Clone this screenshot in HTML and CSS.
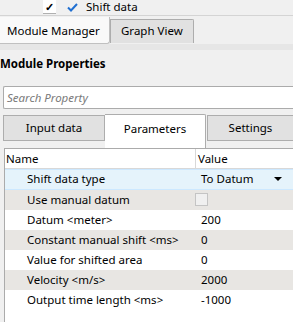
FILE: index.html
```html
<!DOCTYPE HTML>
<html lang="en">
<head>
    <meta charset="utf-8"/>
    <title>Module Properties</title>
    <link rel="stylesheet" href="styles.css">
</head>
<body>
    <div class="topbar">
        <span class="box">&#10003;</span>
        <svg class="tick" width="11" height="9" viewBox="0 0 11 9"><path d="M1 4.5 L4 7.5 L10 1" fill="none" stroke="#1f6fd1" stroke-width="2"/></svg>
        <span class="toplabel">Shift data</span>
    </div>
    <div class="tabs">
        <div class="tab active">Module Manager</div>
        <div class="tab">Graph View</div>
    </div>
    <div class="band"></div>
    <div class="panel">
        <div class="title">Module Properties</div>
        <div class="search">Search Property</div>
        <div class="ptabs">
            <div class="ptab first">Input data</div>
            <div class="ptab sel">Parameters</div>
            <div class="ptab last">Settings</div>
        </div>
        <div class="grid">
            <div class="row head"><span class="name">Name</span><span class="val">Value</span></div>
            <div class="row picked"><span class="name">Shift data type</span><span class="val">To Datum<i class="arrow"></i></span></div>
            <div class="row alt"><span class="name">Use manual datum</span><span class="val"><i class="check"></i></span></div>
            <div class="row"><span class="name">Datum &lt;meter&gt;</span><span class="val">200</span></div>
            <div class="row alt"><span class="name">Constant manual shift &lt;ms&gt;</span><span class="val">0</span></div>
            <div class="row"><span class="name">Value for shifted area</span><span class="val">0</span></div>
            <div class="row alt"><span class="name">Velocity &lt;m/s&gt;</span><span class="val">2000</span></div>
            <div class="row"><span class="name">Output time length &lt;ms&gt;</span><span class="val">-1000</span></div>
        </div>
    </div>
</body>
</html>
```

FILE: styles.css
```css
body {
    margin: 0;
    width: 293px;
    height: 322px;
    overflow: hidden;
    background-color: #f0f0f0;
    font-family: "Noto Sans", "Open Sans", sans-serif;
    font-size: 11.5px;
    color: #000;
}

.topbar {
    display: flex;
    align-items: flex-start;
    height: 16px;
    border-bottom: 1px solid #d4d4d4;
    box-sizing: border-box;
    padding-left: 43px;
}

.box {
    width: 13px;
    height: 13px;
    background-color: #fff;
    border-bottom: 1px solid #b0b0b0;
    font-size: 11px;
    line-height: 13px;
    text-align: center;
    font-weight: bold;
}

.tick {
    margin-left: 11px;
    margin-top: 3px;
}

.toplabel {
    margin-left: 8px;
    line-height: 14px;
}

.tabs {
    display: flex;
    align-items: flex-end;
    height: 28px;
}

.tab {
    height: 23px;
    line-height: 22px;
    padding: 0 10px;
    white-space: nowrap;
    background-color: #e1e1e1;
    border: 1px solid #adadad;
    border-bottom: none;
    border-radius: 0 2px 0 0;
    margin-bottom: 1px;
}

.tab.active {
    height: 26px;
    line-height: 28px;
    width: 102px;
    padding: 0 0 0 7px;
    margin-bottom: 0;
    background-color: #f9f9f9;
    border: none;
    border-right: 1px solid #c0c0c0;
    border-bottom: 1px solid #c0c0c0;
    border-radius: 0 0 3px 0;
}

.band {
    height: 6px;
    background-color: #e6e6e6;
}

.panel {
    padding-left: 3px;
}

.title {
    margin-left: -3px;
    height: 36px;
    line-height: 28px;
    font-weight: bold;
    white-space: nowrap;
}

.search {
    height: 21px;
    line-height: 21px;
    padding-left: 3px;
    background-color: #fff;
    border: 1px solid #ababab;
    border-right: none;
    border-radius: 2px 0 0 2px;
    color: #7a7a7a;
    font-style: italic;
}

.ptabs {
    display: flex;
    align-items: flex-end;
    height: 34px;
    margin-top: 5px;
}

.ptab {
    height: 24px;
    line-height: 24px;
    text-align: center;
    background-color: #e1e1e1;
    border: 1px solid #adadad;
    margin-bottom: 7px;
}

.ptab.first {
    width: 100px;
}

.ptab.sel {
    width: 100px;
    height: 33px;
    line-height: 28px;
    margin-bottom: 0;
    background-color: #fff;
    border-bottom: none;
    border-left: none;
    border-radius: 0 2px 0 0;
}

.ptab.last {
    flex: 1;
    border-right: none;
    margin-left: 1px;
}

.grid {
    height: 180px;
    background-color: #fff;
    border-left: 1px solid #ababab;
    border-top: 1px solid #ababab;
    margin-left: 1px;
}

.row {
    display: flex;
    height: 20px;
    line-height: 19px;
    white-space: nowrap;
}

.row .name {
    width: 168px;
    padding-left: 22px;
    overflow: hidden;
}

.row .val {
    position: relative;
    flex: 1;
    padding-left: 6px;
}

.row.head {
    height: 19px;
    border-bottom: 1px solid #d8d8d8;
}

.row.head .name {
    width: 189px;
    padding-left: 1px;
    border-right: 1px solid #d8d8d8;
}

.row.head .val {
    padding-left: 2px;
}

.row.picked {
    background-color: #e5f3fb;
    border-top: 1px solid #cce8ff;
    border-bottom: 1px solid #cce8ff;
    height: 19px;
    line-height: 18px;
}

.row.alt {
    background-color: #e8e6e3;
}

.arrow {
    position: absolute;
    right: 11px;
    top: 7px;
    border-left: 4px solid transparent;
    border-right: 4px solid transparent;
    border-top: 4px solid #000;
}

.check {
    display: inline-block;
    width: 11px;
    height: 11px;
    margin: 3px 0 0 -6px;
    vertical-align: top;
    background-color: #f0f0f0;
    border: 1px solid #c4c4c4;
}
```
